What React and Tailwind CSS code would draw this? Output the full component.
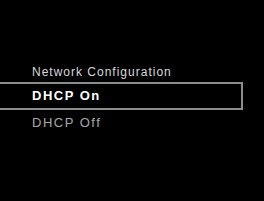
export default function App() {
  return (
    <div
      className="w-[264px] h-[201px] bg-black overflow-hidden pt-[62px]"
      style={{ fontFamily: '"Liberation Sans", Arial, sans-serif' }}
    >
      <div className="h-[20px] pl-[32px] flex items-center text-[12px] tracking-[1px] text-[#d8d8d8]">
        Network Configuration
      </div>
      <div className="w-[243px] h-[28px] border-2 border-l-0 border-[#8c8c8c] pl-[32px] flex items-center text-[13px] font-bold tracking-[1.5px] text-white">
        DHCP On
      </div>
      <div className="h-[26px] pl-[32px] flex items-center text-[13px] tracking-[1.5px] text-[#a8a8a8]">
        DHCP Off
      </div>
    </div>
  );
}
